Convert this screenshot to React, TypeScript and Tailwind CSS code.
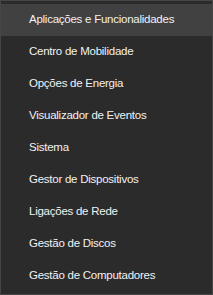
import React from "react";

const items = [
  "Aplicações e Funcionalidades",
  "Centro de Mobilidade",
  "Opções de Energia",
  "Visualizador de Eventos",
  "Sistema",
  "Gestor de Dispositivos",
  "Ligações de Rede",
  "Gestão de Discos",
  "Gestão de Computadores",
];

export default function App() {
  return (
    <div
      className="w-[213px] h-[295px] bg-[#2b2b2b] border border-[#464646] pt-[3px] pb-[2px] flex flex-col"
      style={{ fontFamily: '"Segoe UI", "Liberation Sans", Arial, sans-serif' }}
    >
      {items.map((t, i) => (
        <div
          key={t}
          className={`h-[32px] shrink-0 flex items-center pl-[28px] text-[11.5px] tracking-[-0.25px] text-[#f2f2f2] ${
            i === 0 ? "bg-[#414141]" : ""
          }`}
        >
          {t}
        </div>
      ))}
    </div>
  );
}
